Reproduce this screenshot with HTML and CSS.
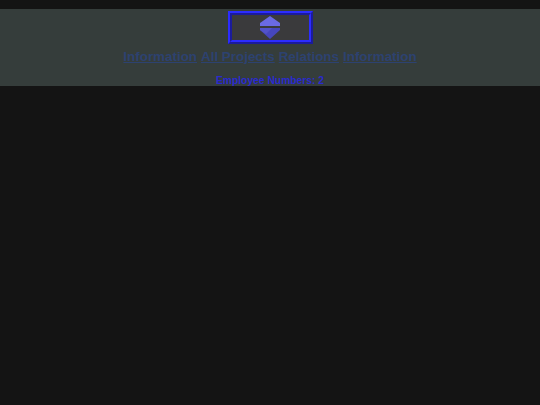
FILE: index.html
```html
<!DOCTYPE html>
<html>
<head>
<meta charset="utf-8">
<link rel="stylesheet" href="styles.css">
</head>
<body>
<header class="top">
  <button class="home-btn" type="button" aria-label="Home">
    <svg width="22" height="24" viewBox="0 0 22 24">
      <polygon points="11,0 21,7 21,10 1,10 1,7" fill="#6a6ae4"/>
      <polygon points="1,12 21,12 21,14 11,23 1,14" fill="#4646be"/>
      <polygon points="1,12 13,12 7,18 1,14" fill="#5252ca"/>
    </svg>
  </button>
  <nav class="links">
    <a href="#">Information</a>
    <a href="#">All Projects</a>
    <a href="#">Relations</a>
    <a href="#">Information</a>
  </nav>
  <p class="count">Employee Numbers: 2</p>
</header>
</body>
</html>
```
FILE: styles.css
```css
html, body {
  margin: 0;
  padding: 0;
  background: #141414;
}
body {
  font-family: "Liberation Sans", Arial, sans-serif;
}
.top {
  margin-top: 9px;
  height: 77px;
  background: #353d3b;
  display: flex;
  flex-direction: column;
  align-items: center;
}
.home-btn {
  margin-top: 2px;
  width: 85px;
  height: 34px;
  background: #3a3a3c;
  border: 4px ridge #2a2af0;
  padding: 0;
  display: flex;
  align-items: center;
  justify-content: center;
}
.links {
  margin-top: 5px;
  display: flex;
  gap: 4px;
  font-size: 13.4px;
  font-weight: bold;
}
.links a {
  color: #2d4270;
  text-decoration: underline;
}
.count {
  margin: 11px 0 0;
  font-size: 10.3px;
  font-weight: bold;
  color: #2a2ad0;
}
```
